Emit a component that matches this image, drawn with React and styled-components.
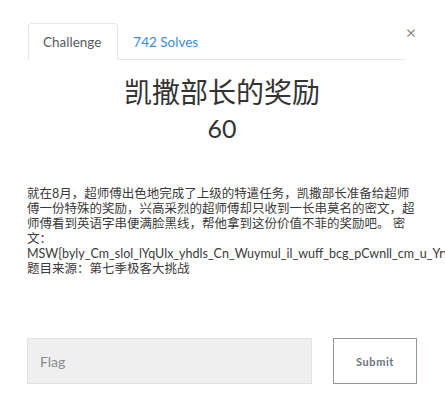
import React from 'react';
import styled, { createGlobalStyle } from 'styled-components';

const GlobalStyle = createGlobalStyle`
  html, body { margin: 0; padding: 0; background: #fff; overflow: hidden; }
  body { font-family: Lato, "Noto Sans CJK SC", sans-serif; color: #212529; }
`;

const Modal = styled.div`
  width: 390px;
  padding: 23px 0 0 27px;
`;

const Header = styled.div`
  display: flex;
  align-items: flex-start;
`;

const Tabs = styled.ul`
  display: flex;
  flex: 1;
  margin: 0;
  padding: 0 0 0 1px;
  list-style: none;
  border-bottom: 1px solid #e4e7ea;
`;

const Tab = styled.li`
  height: 35px;
  padding: 0 16px 0 14px;
  display: flex;
  align-items: center;
  font-size: 13.5px;
  margin-bottom: -1px;
  border: 1px solid ${p => (p.active ? '#e4e7ea' : 'transparent')};
  border-bottom-color: ${p => (p.active ? '#fff' : 'transparent')};
  border-radius: 4px 4px 0 0;
  background: ${p => (p.active ? '#fff' : 'transparent')};
  color: ${p => (p.active ? '#555b61' : '#3d8bd5')};
`;

const Close = styled.span`
  width: 12px;
  margin-top: 0;
  font-size: 18px;
  line-height: 18px;
  color: #8a8a8a;
  text-align: center;
`;

const Title = styled.h2`
  margin: 14px 0 0;
  text-align: center;
  font-weight: 400;
  font-size: 28px;
  line-height: 36px;
  color: #333;
`;

const Points = styled.h3`
  margin: 2px 0 0;
  text-align: center;
  font-weight: 400;
  font-size: 25px;
  line-height: 32px;
  color: #333;
`;

const Description = styled.div`
  margin-top: 42px;
  font-size: 12.5px;
  line-height: 15px;
  color: #3a3a3a;
  p { margin: 0; }
`;

const Cipher = styled.p`
  white-space: nowrap;
`;

const Form = styled.form`
  display: flex;
  gap: 21px;
  margin-top: 62px;
`;

const Input = styled.input`
  box-sizing: border-box;
  width: 285px;
  height: 46px;
  padding: 0 12px;
  background: #efefef;
  border: 1px solid #dfe2e6;
  font-family: Lato, sans-serif;
  font-size: 14px;
  color: #495057;
  outline: none;
  &::placeholder { color: #868c92; }
`;

const Button = styled.button`
  box-sizing: border-box;
  width: 84px;
  height: 46px;
  background: #fff;
  border: 1px solid #8f979e;
  font-family: Lato, sans-serif;
  font-weight: 700;
  font-size: 11px;
  letter-spacing: 0.6px;
  color: #6c747c;
`;

export default function App() {
  return (
    <>
      <GlobalStyle />
      <Modal>
        <Header>
          <Tabs>
            <Tab active>Challenge</Tab>
            <Tab>742 Solves</Tab>
          </Tabs>
          <Close>×</Close>
        </Header>
        <Title>凯撒部长的奖励</Title>
        <Points>60</Points>
        <Description>
          <p>就在8月，超师傅出色地完成了上级的特遣任务，凯撒部长准备给超师傅一份特殊的奖励，兴高采烈的超师傅却只收到一长串莫名的密文，超师傅看到英语字串便满脸黑线，帮他拿到这份价值不菲的奖励吧。 密文：</p>
          <Cipher>MSW{`{`}byly_Cm_slol_lYqUlx_yhdls_Cn_Wuymul_il_wuff_bcg_pCwnll_cm_u_Yrwyw{`}`}</Cipher>
          <p>题目来源：第七季极客大挑战</p>
        </Description>
        <Form onSubmit={e => e.preventDefault()}>
          <Input placeholder="Flag" />
          <Button type="submit">Submit</Button>
        </Form>
      </Modal>
    </>
  );
}
